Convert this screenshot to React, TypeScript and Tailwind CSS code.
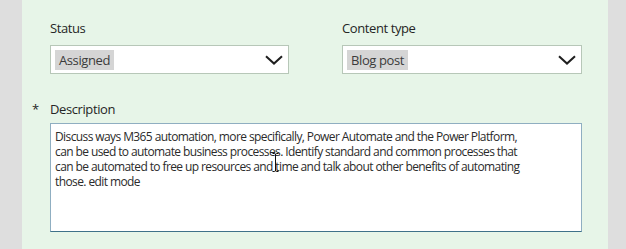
function Chevron() {
  return (
    <svg width="18" height="10" viewBox="0 0 18 10" fill="none">
      <path d="M1 1.2 L9 8.6 L17 1.2" stroke="#1f1f1f" strokeWidth="2" />
    </svg>
  );
}

function Dropdown({ label, value }: { label: string; value: string }) {
  return (
    <div className="flex flex-col">
      <label className="text-[13px] tracking-[-0.4px] leading-[18px] text-[#252525] mb-[8px]">{label}</label>
      <div className="h-[29px] bg-white border border-[#b7c7b8] flex items-center justify-between pl-[4px] pr-[5px]">
        <span className="bg-[#d5d5d5] text-[#3b3b3b] text-[13px] tracking-[-0.4px] leading-[20px] px-[4px]">{value}</span>
        <Chevron />
      </div>
    </div>
  );
}

const lines = [
  "Discuss ways M365 automation, more specifically, Power Automate and the Power Platform,",
  "can be used to automate business processes. Identify standard and common processes that",
  "can be automated to free up resources and time and talk about other benefits of automating",
  "those. edit mode",
];

export default function App() {
  return (
    <div className="flex h-[249px] w-[626px] overflow-hidden" style={{ fontFamily: "'Open Sans', 'Noto Sans', sans-serif" }}>
      <div className="w-[22px] bg-[#dedede]" />
      <div className="flex-1 bg-[#e7f5e8] pl-[28px] pr-[26px] pt-[19px]">
        <div className="grid grid-cols-[239px_240px] gap-x-[53px]">
          <Dropdown label="Status" value="Assigned" />
          <Dropdown label="Content type" value="Blog post" />
        </div>

        <div className="relative mt-[26px] text-[13px] tracking-[-0.4px] leading-[18px] text-[#252525]">
          <span className="absolute -left-[18px] top-0">*</span>
          Description
        </div>

        <div className="relative mt-[5px] h-[109px] bg-white border border-[#8faec1] border-b-[#3f7189] px-[4px] pt-[5px] text-[12px] tracking-[-0.6px] leading-[15px] text-[#2b2b2b] whitespace-nowrap">
          {lines.map((l) => (
            <div key={l}>{l}</div>
          ))}
          {/* mouse I-beam cursor */}
          <svg className="absolute left-[221px] top-[29px]" width="7" height="19" viewBox="0 0 7 19" fill="none">
            <path d="M0.5 0.5 H2.5 Q3.5 0.5 3.5 2 V17 Q3.5 18.5 4.5 18.5 H6.5 M6.5 0.5 H4.5 Q3.5 0.5 3.5 2 M3.5 17 Q3.5 18.5 2.5 18.5 H0.5" stroke="#111" strokeWidth="1" />
          </svg>
        </div>
      </div>
      <div className="w-[18px] bg-[#dedede]" />
    </div>
  );
}
